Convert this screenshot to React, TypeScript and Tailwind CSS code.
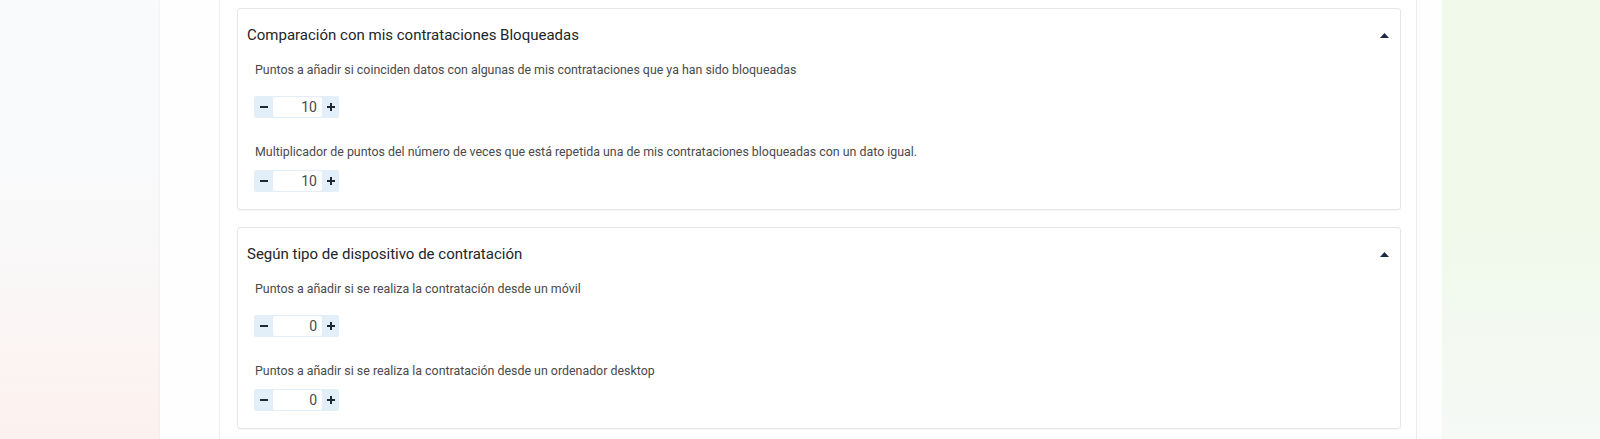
import { useState } from "react";

interface Field {
  label: string;
  value: number;
}

interface Section {
  title: string;
  fields: Field[];
}

const sections: Section[] = [
  {
    title: "Comparación con mis contrataciones Bloqueadas",
    fields: [
      { label: "Puntos a añadir si coinciden datos con algunas de mis contrataciones que ya han sido bloqueadas", value: 10 },
      { label: "Multiplicador de puntos del número de veces que está repetida una de mis contrataciones bloqueadas con un dato igual.", value: 10 },
    ],
  },
  {
    title: "Según tipo de dispositivo de contratación",
    fields: [
      { label: "Puntos a añadir si se realiza la contratación desde un móvil", value: 0 },
      { label: "Puntos a añadir si se realiza la contratación desde un ordenador desktop", value: 0 },
    ],
  },
];

function Stepper({ initial }: { initial: number }) {
  const [value, setValue] = useState(initial);
  return (
    <div className="flex h-[22px] w-[85px] rounded-[2px] bg-[#e2eff9] py-[1px]">
      <button
        onClick={() => setValue((v) => v - 1)}
        className="flex w-[19px] items-center justify-center"
      >
        <span className="block h-[2px] w-[8px] bg-[#1f2733]" />
      </button>
      <div className="flex flex-1 items-center justify-end rounded-[2px] bg-white pr-[5px] text-[14px] text-[#4a4a4a]">
        {value}
      </div>
      <button
        onClick={() => setValue((v) => v + 1)}
        className="flex w-[17px] items-center justify-center"
      >
        <svg width="10" height="10" viewBox="0 0 10 10">
          <path d="M5 1v8M1 5h8" stroke="#1f2733" strokeWidth="2" />
        </svg>
      </button>
    </div>
  );
}

function Card({ section }: { section: Section }) {
  return (
    <div className="rounded-[3px] border border-[#e6e6e6] bg-white pb-[17px] pt-[14px] shadow-[0_1px_2px_rgba(0,0,0,0.04)]">
      <div className="flex h-[24px] items-center justify-between pl-[9px] pr-[11px]">
        <h3 className="text-[15px] text-[#222529]">{section.title}</h3>
        <svg width="9" height="5" viewBox="0 0 9 5">
          <path d="M0 5 4.5 0 9 5z" fill="#1c2a44" />
        </svg>
      </div>
      <div className="mt-[14px] flex flex-col pl-[16px]">
        {section.fields.map((f, i) => (
          <div key={i} className={i === 0 ? "" : "mt-[25px]"}>
            <p className="h-[18px] pl-[1px] text-[12.4px] leading-[18px] text-[#4a4a4a]">{f.label}</p>
            <div className={i === 0 ? "mt-[17px]" : "mt-[9px]"}>
              <Stepper initial={f.value} />
            </div>
          </div>
        ))}
      </div>
    </div>
  );
}

export default function App() {
  return (
    <div
      className="flex h-[439px] w-full overflow-hidden"
      style={{ fontFamily: "Roboto, 'Liberation Sans', sans-serif" }}
    >
      {/* left backdrop */}
      <div className="w-[160px] shrink-0 bg-gradient-to-b from-[#f8fafc] via-[#f9f9fa] to-[#fcf1ef]" />

      {/* page body */}
      <div className="flex w-[1282px] shrink-0 bg-[#fefefe] shadow-[-1px_0_2px_rgba(0,0,0,0.03)]">
        <div className="ml-[59px] flex w-[1198px] flex-col gap-[17px] border-x border-[#ececec] bg-white pl-[17px] pr-[15px] pt-[8px]">
          {sections.map((s, i) => (
            <Card key={i} section={s} />
          ))}
        </div>
      </div>

      {/* right backdrop */}
      <div className="flex-1 bg-gradient-to-b from-[#f1f9ea] via-[#f0f9ea] to-[#f6f9f6]" />
    </div>
  );
}
